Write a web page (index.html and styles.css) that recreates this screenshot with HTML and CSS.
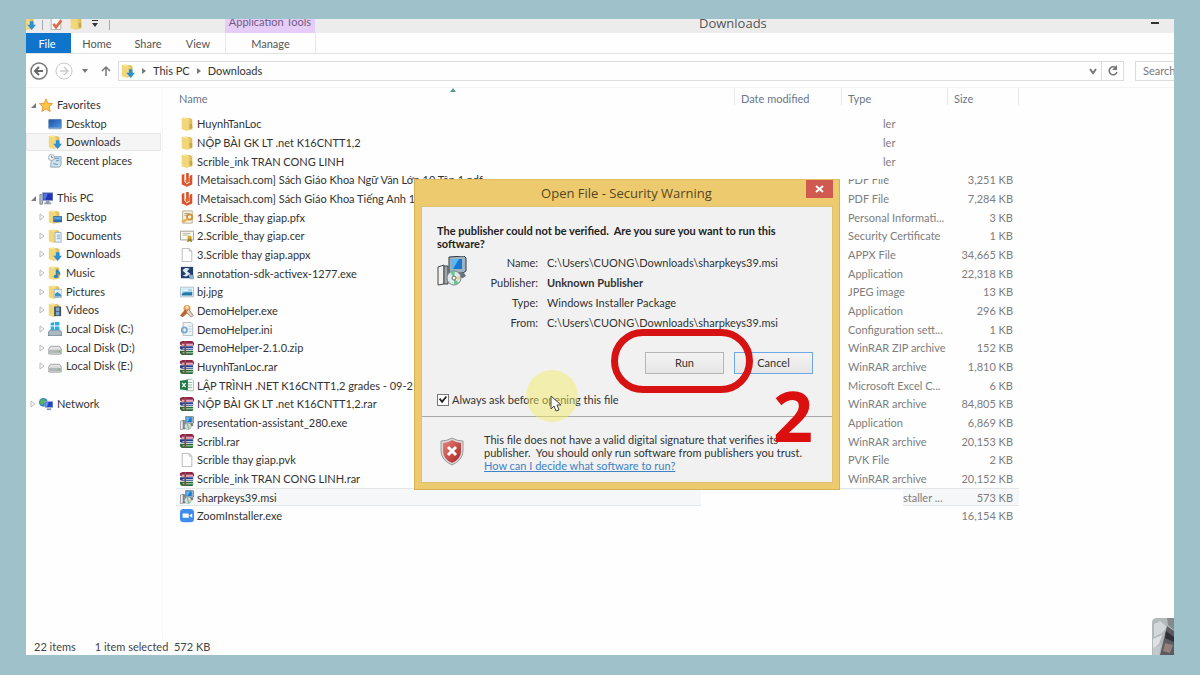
FILE: index.html
```html
<!DOCTYPE html>
<html lang="en">
<head>
<meta charset="utf-8">
<title>Downloads</title>
<link rel="stylesheet" href="styles.css">
</head>
<body>
<svg class="sprite" aria-hidden="true">
  <defs>
    <linearGradient id="gold" x1="0" x2="1"><stop offset="0" stop-color="#f7e394"/><stop offset="1" stop-color="#d9b548"/></linearGradient>
    <linearGradient id="screen" x1="0" y1="0" x2="1" y2="1"><stop offset="0" stop-color="#1d4fa8"/><stop offset="1" stop-color="#4a9be8"/></linearGradient>
    <linearGradient id="red" x1="0" y1="0" x2="1" y2="1"><stop offset="0" stop-color="#e8837c"/><stop offset="1" stop-color="#a8221f"/></linearGradient>
  </defs>
  <symbol id="folder" viewBox="0 0 16 16"><path d="M2 1l6-1v15l-6-1z" fill="#f8e9a6"/><path d="M7 1h5l2 2v11l-7 2z" fill="url(#gold)"/><path d="M2 1l6 2v13l-6-2z" fill="#f1d67a"/><path d="M11 8h3v5h-3z" fill="#c9a545"/></symbol>
  <symbol id="downloads" viewBox="0 0 16 16"><use href="#folder" x="-1"/><path d="M9 6h4v4h3l-5 6-5-6h3z" fill="#2b8fd4"/></symbol>
  <symbol id="desktop-folder" viewBox="0 0 16 16"><use href="#folder" x="-1"/><path d="M6 7h10v7H6z" fill="#2f6aa8"/><path d="M7 8h8v3H7z" fill="#5aa0d8"/></symbol>
  <symbol id="documents" viewBox="0 0 16 16"><use href="#folder" x="-1"/><path d="M8 4h7v11H8z" fill="#eef5fb" stroke="#8fb2cc"/><path d="M10 7h4M10 9h4M10 11h4" stroke="#7ba7cb"/></symbol>
  <symbol id="music" viewBox="0 0 16 16"><use href="#folder" x="-1"/><path d="M10 4c1 3 4 3 3 6M10 4v8" fill="none" stroke="#2583bd" stroke-width="2"/><ellipse cx="9" cy="12" rx="2.500" ry="2" fill="#2583bd"/></symbol>
  <symbol id="pictures" viewBox="0 0 16 16"><use href="#folder" x="-1"/><path d="M7 5h9v9H7z" fill="#e8f3fa" stroke="#8eb0c6"/><path d="M8 10l3-2 4 3v2H8z" fill="#3e91bd"/></symbol>
  <symbol id="videos" viewBox="0 0 16 16"><use href="#folder" x="-1"/><path d="M7 4h8v11H7z" fill="#44525f"/><path d="M9 5h4v4H9zM9 10h4v4H9z" fill="#78a9cc"/></symbol>
  <symbol id="star" viewBox="0 0 16 16"><path d="M8 1l2 5 5.500.500-4 3.500 1.300 5.500L8 12.500 3.200 15.500l1.300-5.500-4-3.500L6 6z" fill="#fdc544" stroke="#e98f2e"/></symbol>
  <symbol id="desktop" viewBox="0 0 16 16"><path d="M1 3h14v10H1z" fill="url(#screen)" stroke="#4a6f9e"/><path d="M1 12h14v2H1z" fill="#8ba5c4"/></symbol>
  <symbol id="recent" viewBox="0 0 16 16"><path d="M4 3h11v9l-2 3H3z" fill="#cfe0ec" stroke="#8ca6b8"/><circle cx="4" cy="4" r="3.500" fill="#eef1f3" stroke="#9aa5ad"/><path d="M4 2v2h2M8 5h5M9 8l4-1M6 11l5 1" fill="none" stroke="#4f8fba"/></symbol>
  <symbol id="pc" viewBox="0 0 16 16"><path d="M1 4h3v11H1z" fill="#b6bcc4" stroke="#7c838c"/><path d="M4 2h12v9H4z" fill="#2038b8" stroke="#9aa6c4"/><path d="M5 3h5l-3 7H5z" fill="#5478e0"/><path d="M8 11h4v2h2v2H6v-2h2z" fill="#8f9bab"/></symbol>
  <symbol id="disk" viewBox="0 0 16 16"><path d="M3 6h10l3 4v3q0 2-2 2H2q-2 0-2-2v-3z" fill="#e2e2e2" stroke="#9b9b9b"/><path d="M1 10h14v4H1z" fill="#b4b7b9"/><path d="M12 11h2v2h-2z" fill="#4fd04a"/></symbol>
  <symbol id="windisk" viewBox="0 0 16 16"><path d="M3 9h10l3 3v4H0v-4z" fill="#a9b9c2" stroke="#64747e"/><path d="M3 1l4-1v4H3zM8 0h5v4H8zM3 5h4v4H3zM8 5h5v4H8z" fill="#28aee4"/></symbol>
  <symbol id="network" viewBox="0 0 16 16"><circle cx="5" cy="6" r="5" fill="#2d86c7"/><path d="M2 3l4-1 1 3-3 4-3-2z" fill="#58b858"/><path d="M7 5h9v7H7z" fill="#2445c0" stroke="#aab5cf"/><path d="M8 6h3l-2 5H8z" fill="#6d96ec"/><path d="M9 13h5v2H9z" fill="#8995a8"/></symbol>
  <symbol id="pdf" viewBox="0 0 16 16"><path d="M2 2l3-1v9l2 2v3l-5-2zM7 0h3v9H7zM11 3l3-1v11l-7 3v-3l4-2z" fill="#d9532c"/><path d="M6 8l5-2v4l-4 2z" fill="#e06a40"/></symbol>
  <symbol id="pfx" viewBox="0 0 16 16"><path d="M3 1h11v14H3z" fill="#f6f1e0" stroke="#b3a88a"/><path d="M5 4h6M5 6h5" stroke="#9a9a8c"/><circle cx="11" cy="8" r="3" fill="none" stroke="#d58f2c" stroke-width="2"/><path d="M9 9l-7 3v2h3l5-3" fill="#e8b04c"/></symbol>
  <symbol id="cer" viewBox="0 0 16 16"><path d="M.500 2.500h15v10H.500z" fill="#fbfaf0" stroke="#98958a"/><path d="M3 5h9M3 7h7" stroke="#b0ada0"/><circle cx="11" cy="10" r="2.500" fill="#d9a92f"/><path d="M9 11l-1 4 3-1 3 1-1-4z" fill="#a5831f"/></symbol>
  <symbol id="file" viewBox="0 0 16 16"><path d="M2.500.500h8l3 3v12h-11z" fill="#fdfdfd" stroke="#b5b5b5"/><path d="M10.500.500v3h3" fill="none" stroke="#b5b5b5"/></symbol>
  <symbol id="sdk" viewBox="0 0 16 16"><path d="M1 1h14v13H1z" fill="#20406f"/><path d="M3 5c2-3 5-3 8-2L8 6l4 3-5 3-4-1 4-2z" fill="#dfe9f3"/><path d="M10 9l6 2v4h-5z" fill="#8ab1c9"/></symbol>
  <symbol id="jpg" viewBox="0 0 16 16"><path d="M.500 2.500h15v11H.500z" fill="#fff" stroke="#a8b4bc"/><path d="M2 4h12v8H2z" fill="#a8d8f2"/><path d="M2 10c4-3 7-1 12-2v4H2z" fill="#2678a8"/><path d="M3 5h6v2H3z" fill="#e8f6fc"/></symbol>
  <symbol id="helper" viewBox="0 0 16 16"><circle cx="8" cy="5" r="4" fill="#e89b52"/><path d="M6 6l-6 7 3 2 6-5z" fill="#b8682f"/><path d="M10 6l5 7-2 2-6-6z" fill="#e0d3c8" stroke="#a57d60"/><circle cx="8" cy="4" r="2" fill="#fbd9a8"/></symbol>
  <symbol id="ini" viewBox="0 0 16 16"><path d="M3.500.500h9l2 2v13h-11z" fill="#eef3f7" stroke="#aab7c1"/><circle cx="5" cy="9" r="3" fill="none" stroke="#7da5c6" stroke-width="2"/><path d="M10 5h3M10 8h3M10 11h3" stroke="#b4c4d0"/></symbol>
  <symbol id="rar" viewBox="0 0 16 16"><path d="M0 1l3-1h11l2 2v3H2L0 4z" fill="#8e2546"/><path d="M2 3h13v2H2z" fill="#e7a2b8"/><path d="M0 6h15v4H2L0 9z" fill="#233f8e"/><path d="M3 8h13v1H3z" fill="#c9d6ef"/><path d="M0 11h15v4l-1 1H2l-2-2z" fill="#286b3a"/><path d="M3 13h13v1H3z" fill="#cfe8c8"/><path d="M5 0h2v16H5z" fill="#8a4a43"/></symbol>
  <symbol id="xls" viewBox="0 0 16 16"><path d="M7.500 1.500h6l2 2v11h-8z" fill="#fff" stroke="#9cb7a4"/><path d="M9 5h5M9 8h5M9 11h5" stroke="#70a983"/><path d="M0 3l9-1v12l-9-1z" fill="#1f7a46"/><path d="M2.500 5.500l4 5M6.500 5.500l-4 5" stroke="#fff" stroke-width="1.500"/></symbol>
  <symbol id="installer" viewBox="0 0 30 30"><path d="M12 1l15-1 2 2v13l-3 2H12z" fill="#9fb2c0" stroke="#2f3a44"/><path d="M14 3h11v10H14z" fill="#1878d0"/><path d="M14 3h8l-6 10h-2z" fill="#5eb7f2"/><path d="M13 17h14l2 3-3 2H14z" fill="#69737c"/><path d="M1 11l6-2v19l-6 1z" fill="#f0f0f0" stroke="#464646"/><path d="M7 10h4v18H7z" fill="#9ea4a8" stroke="#464646"/><circle cx="17" cy="22" r="7" fill="#dfe9ec" stroke="#78858c"/><path d="M17 22l-4-6 5-1zM17 22l5 5-5 2z" fill="#6fc68d"/><path d="M17 22l6-2v4z" fill="#ecd67b"/><circle cx="17" cy="22" r="2" fill="#fff" stroke="#5e6d74"/></symbol>
  <symbol id="zoom" viewBox="0 0 16 16"><rect width="16" height="15" rx="4" fill="#3f8cf0"/><path d="M3 5h6q1 0 1 1v4H4q-1 0-1-1zM11 7l3-2v5l-3-2z" fill="#fff"/></symbol>
  <symbol id="open" viewBox="0 0 8 8"><path d="M7 2v5H2z" fill="#7b7b7b"/></symbol>
  <symbol id="closed" viewBox="0 0 8 8"><path d="M2 1l4 3-4 3z" fill="none" stroke="#bcbcbc"/></symbol>
</svg>

<div class="window">
  <header class="titlebar">
    <div class="quick">
      <svg class="ico"><use href="#downloads"/></svg><i></i>
      <svg class="ico" viewBox="0 0 16 16"><path d="M2.500.500h11v15h-11z" fill="#fff" stroke="#a9a9a9"/><path d="M5 9l3 4 6-8" fill="none" stroke="#db6b45" stroke-width="3"/></svg>
      <svg class="ico"><use href="#folder"/></svg>
      <svg class="drop" viewBox="0 0 8 8"><path d="M1 0h6v1H1zM1 3h6L4 7z" fill="#333"/></svg><i></i>
    </div>
    <div class="context">Application Tools</div>
    <h1>Downloads</h1>
    <button class="minimise" aria-label="Minimize"></button>
  </header>
  <nav class="tabs">
    <button class="tab file">File</button><button class="tab">Home</button><button class="tab">Share</button><button class="tab">View</button><button class="tab manage">Manage</button>
  </nav>
  <div class="location">
    <button aria-label="Back"><svg width="18" height="18" viewBox="0 0 18 18"><circle cx="9" cy="9" r="8" fill="none" stroke="#777" stroke-width="1.500"/><path d="M13 9H5M9 5L5 9l4 4" fill="none" stroke="#666" stroke-width="2"/></svg></button>
    <button aria-label="Forward"><svg width="18" height="18" viewBox="0 0 18 18"><circle cx="9" cy="9" r="8" fill="none" stroke="#ccc"/><path d="M5 9h8M9 5l4 4-4 4" fill="none" stroke="#ccc" stroke-width="1.500"/></svg></button>
    <button class="recent-btn" aria-label="Recent locations"><svg width="8" height="8"><path d="M1 2h6L4 6z" fill="#777"/></svg></button>
    <button class="up" aria-label="Up"><svg width="10" height="12" viewBox="0 0 10 12"><path d="M5 11V2M1 6l4-4 4 4" fill="none" stroke="#777" stroke-width="1.500"/></svg></button>
    <div class="address">
      <svg class="ico"><use href="#downloads"/></svg>
      <svg class="sep" viewBox="0 0 6 8"><path d="M1 1l4 3-4 3z" fill="#777"/></svg><span>This PC</span>
      <svg class="sep" viewBox="0 0 6 8"><path d="M1 1l4 3-4 3z" fill="#777"/></svg><span>Downloads</span>
      <button class="history" aria-label="Previous locations"><svg width="8" height="8"><path d="M1 2l3 4 3-4" fill="none" stroke="#777" stroke-width="2"/></svg></button>
      <button class="refresh" aria-label="Refresh"><svg width="12" height="12" viewBox="0 0 12 12"><path d="M9 3a4 4 0 1 0 1 4" fill="none" stroke="#777" stroke-width="1.500"/><path d="M10 0v5H5z" fill="#777"/></svg></button>
    </div>
    <input class="search" type="text" placeholder="Search" aria-label="Search">
  </div>

  <div class="body">
    <ul class="tree">
      <li class="root"><svg class="arrow"><use href="#open"/></svg><svg class="ico"><use href="#star"/></svg>Favorites</li>
      <li><svg class="ico"><use href="#desktop"/></svg>Desktop</li>
      <li class="current"><svg class="ico"><use href="#downloads"/></svg>Downloads</li>
      <li><svg class="ico"><use href="#recent"/></svg>Recent places</li>
      <li class="blank"></li>
      <li class="root"><svg class="arrow"><use href="#open"/></svg><svg class="ico"><use href="#pc"/></svg>This PC</li>
      <li><svg class="arrow"><use href="#closed"/></svg><svg class="ico"><use href="#desktop-folder"/></svg>Desktop</li>
      <li><svg class="arrow"><use href="#closed"/></svg><svg class="ico"><use href="#documents"/></svg>Documents</li>
      <li><svg class="arrow"><use href="#closed"/></svg><svg class="ico"><use href="#downloads"/></svg>Downloads</li>
      <li><svg class="arrow"><use href="#closed"/></svg><svg class="ico"><use href="#music"/></svg>Music</li>
      <li><svg class="arrow"><use href="#closed"/></svg><svg class="ico"><use href="#pictures"/></svg>Pictures</li>
      <li><svg class="arrow"><use href="#closed"/></svg><svg class="ico"><use href="#videos"/></svg>Videos</li>
      <li><svg class="arrow"><use href="#closed"/></svg><svg class="ico"><use href="#windisk"/></svg>Local Disk (C:)</li>
      <li><svg class="arrow"><use href="#closed"/></svg><svg class="ico"><use href="#disk"/></svg>Local Disk (D:)</li>
      <li><svg class="arrow"><use href="#closed"/></svg><svg class="ico"><use href="#disk"/></svg>Local Disk (E:)</li>
      <li class="blank"></li>
      <li class="root"><svg class="arrow"><use href="#closed"/></svg><svg class="ico"><use href="#network"/></svg>Network</li>
    </ul>

    <main class="files">
      <table>
        <colgroup><col><col class="c-date"><col class="c-type"><col class="c-size"></colgroup>
        <thead><tr><th><span>Name</span><svg class="sort" viewBox="0 0 6 4"><path d="M0 4l3-4 3 4z" fill="#5b9a94"/></svg></th><th><span>Date modified</span></th><th><span>Type</span></th><th><span>Size</span></th></tr></thead>
        <tbody>
          <tr><td><svg class="ico"><use href="#folder"/></svg>HuynhTanLoc</td><td></td><td class="tail">ler</td><td></td></tr>
          <tr><td><svg class="ico"><use href="#folder"/></svg>NỘP BÀI GK LT .net K16CNTT1,2</td><td></td><td class="tail">ler</td><td></td></tr>
          <tr><td><svg class="ico"><use href="#folder"/></svg>Scrible_ink TRAN CONG LINH</td><td></td><td class="tail">ler</td><td></td></tr>
          <tr><td><svg class="ico"><use href="#pdf"/></svg>[Metaisach.com] Sách Giáo Khoa Ngữ Văn Lớp 10 Tập 1.pdf</td><td></td><td>PDF File</td><td>3,251 KB</td></tr>
          <tr><td><svg class="ico"><use href="#pdf"/></svg>[Metaisach.com] Sách Giáo Khoa Tiếng Anh 10</td><td></td><td>PDF File</td><td>7,284 KB</td></tr>
          <tr><td><svg class="ico"><use href="#pfx"/></svg>1.Scrible_thay giap.pfx</td><td></td><td>Personal Informati...</td><td>3 KB</td></tr>
          <tr><td><svg class="ico"><use href="#cer"/></svg>2.Scrible_thay giap.cer</td><td></td><td>Security Certificate</td><td>1 KB</td></tr>
          <tr><td><svg class="ico"><use href="#file"/></svg>3.Scrible thay giap.appx</td><td></td><td>APPX File</td><td>34,665 KB</td></tr>
          <tr><td><svg class="ico"><use href="#sdk"/></svg>annotation-sdk-activex-1277.exe</td><td></td><td>Application</td><td>22,318 KB</td></tr>
          <tr><td><svg class="ico"><use href="#jpg"/></svg>bj.jpg</td><td></td><td>JPEG image</td><td>13 KB</td></tr>
          <tr><td><svg class="ico"><use href="#helper"/></svg>DemoHelper.exe</td><td></td><td>Application</td><td>296 KB</td></tr>
          <tr><td><svg class="ico"><use href="#ini"/></svg>DemoHelper.ini</td><td></td><td>Configuration sett...</td><td>1 KB</td></tr>
          <tr><td><svg class="ico"><use href="#rar"/></svg>DemoHelper-2.1.0.zip</td><td></td><td>WinRAR ZIP archive</td><td>152 KB</td></tr>
          <tr><td><svg class="ico"><use href="#rar"/></svg>HuynhTanLoc.rar</td><td></td><td>WinRAR archive</td><td>1,810 KB</td></tr>
          <tr><td><svg class="ico"><use href="#xls"/></svg>LẬP TRÌNH .NET K16CNTT1,2 grades - 09-21-20</td><td></td><td>Microsoft Excel C...</td><td>6 KB</td></tr>
          <tr><td><svg class="ico"><use href="#rar"/></svg>NỘP BÀI GK LT .net K16CNTT1,2.rar</td><td></td><td>WinRAR archive</td><td>84,805 KB</td></tr>
          <tr><td><svg class="ico"><use href="#installer"/></svg>presentation-assistant_280.exe</td><td></td><td>Application</td><td>6,869 KB</td></tr>
          <tr><td><svg class="ico"><use href="#rar"/></svg>Scribl.rar</td><td></td><td>WinRAR archive</td><td>20,153 KB</td></tr>
          <tr><td><svg class="ico"><use href="#file"/></svg>Scrible thay giap.pvk</td><td></td><td>PVK File</td><td>2 KB</td></tr>
          <tr><td><svg class="ico"><use href="#rar"/></svg>Scrible_ink TRAN CONG LINH.rar</td><td></td><td>WinRAR archive</td><td>20,152 KB</td></tr>
          <tr class="selected"><td><svg class="ico"><use href="#installer"/></svg>sharpkeys39.msi</td><td></td><td class="tail wide">staller ...</td><td>573 KB</td></tr>
          <tr><td><svg class="ico"><use href="#zoom"/></svg>ZoomInstaller.exe</td><td></td><td></td><td>16,154 KB</td></tr>
        </tbody>
      </table>
    </main>
  </div>

  <footer class="status"><span>22 items</span><span>1 item selected&nbsp; 572 KB</span></footer>

  <div class="patch upper"></div>
  <div class="patch lower"></div>
  <svg class="corner" viewBox="0 0 22 37" aria-hidden="true"><path d="M0 5q0-5 5-5h17v37H0z" fill="#b3b9bb"/><path d="M2 6l6-3 7 6-5 6-8 4z" fill="#d3d8da"/><path d="M1 21l9-4-3 9-6 5z" fill="#dde1e2"/><path d="M1 30l8-3-2 10H1z" fill="#c3c8ca"/><path d="M15 8l7 5v24H8z" fill="#5b5b60"/><path d="M14 13l8 6v5l-9-4z" fill="#303137"/><path d="M13 25l8 2-3 8-7-2z" fill="#957e7f"/><path d="M15 0h7v12l-6-5z" fill="#858b8d"/></svg>

  <section class="dialog" role="dialog" aria-labelledby="dlg-title">
    <div class="dlg-bar"><h2 id="dlg-title">Open File - Security Warning</h2><button class="close" aria-label="Close"><svg width="9" height="8" viewBox="0 0 9 8"><path d="M1 1l7 6M8 1L1 7" stroke="#fff" stroke-width="2"/></svg></button></div>
    <div class="dlg-body">
      <div class="dlg-top">
        <p class="ask">The publisher could not be verified.&nbsp; Are you sure you want to run this software?</p>
        <div class="info">
          <svg class="big"><use href="#installer"/></svg>
          <dl>
            <dt>Name:</dt><dd>C:\Users\CUONG\Downloads\sharpkeys39.msi</dd>
            <dt>Publisher:</dt><dd><b>Unknown Publisher</b></dd>
            <dt>Type:</dt><dd>Windows Installer Package</dd>
            <dt>From:</dt><dd>C:\Users\CUONG\Downloads\sharpkeys39.msi</dd>
          </dl>
        </div>
        <div class="actions"><button>Run</button><button class="default">Cancel</button></div>
        <label class="always"><input type="checkbox" checked><span>Always ask before opening this file</span></label>
      </div>
      <div class="dlg-foot">
        <svg class="shield" viewBox="0 0 24 29"><path d="M12 1q5 3 11 3v10q0 9-11 14Q1 23 1 14V4q6 0 11-3z" fill="#d9d9d9" stroke="#9b9b9b"/><path d="M12 3q5 3 9 3v8q0 8-9 12-9-4-9-12V6q5 0 9-3z" fill="url(#red)"/><path d="M8 10l8 8M16 10l-8 8" stroke="#fff" stroke-width="3"/></svg>
        <p>This file does not have a valid digital signature that verifies its<br>publisher.&nbsp; You should only run software from publishers you trust.<br><a href="#help">How can I decide what software to run?</a></p>
      </div>
    </div>
  </section>

  <div class="glow"></div>
  <svg class="cursor" viewBox="0 0 12 18"><path d="M1 1v13l3-3 2 5 3-1-2-5h4z" fill="#fff" stroke="#444"/></svg>
  <div class="ring"></div>
  <div class="step">2</div>
</div>
</body>
</html>
```
FILE: styles.css
```css
* { box-sizing: border-box; }
body {
  margin: 0;
  min-height: 100vh;
  padding: 19px 26px 20px;
  display: flex;
  background: #9fc1c9;
  font: 11px/18px Lato, "Noto Sans", sans-serif;
  color: #333;
}
button, input { font: inherit; color: inherit; }
button { border: 0; padding: 0; background: none; }
svg { display: block; flex: none; }
.sprite { position: absolute; width: 0; height: 0; }
.ico { width: 14px; height: 14px; }

.window {
  position: relative;
  flex: 1;
  min-width: 0;
  display: flex;
  flex-direction: column;
  overflow: hidden;
  background: #fefefe;
}

.titlebar {
  display: flex;
  height: 14px;
  overflow: hidden;
  background: #ececec;
}
.quick {
  width: 199px;
  display: flex;
  gap: 6px;
  align-items: flex-end;
  height: 11px;
  padding-right: 118px;
}
.quick .ico:first-child { margin-left: -4px; }
.quick i { flex: none; width: 1px; height: 10px; background: #aaa; }
.drop { width: 8px; height: 8px; margin: 0 4px 2px 2px; }
.context {
  width: 90px;
  text-align: center;
  line-height: 5px;
  white-space: nowrap;
  background: #e6cdf7;
  color: #705b82;
}
.titlebar h1 {
  flex: 1;
  margin: 0;
  padding-left: 384px;
  font: 400 13px/8px "Open Sans", sans-serif;
  color: #555;
}
.minimise { width: 8px; height: 2px; margin: 3px 15px 0 0; background: #333; }

.tabs {
  display: flex;
  height: 21px;
  border-bottom: 1px solid #e2e2e2;
  color: #555;
}
.tab { width: 50px; line-height: 22px; }
.tab.file { width: 45px; height: 20px; padding-right: 3px; margin-right: 1px; background: #0f75cc; color: #fff; }
.tab.manage { width: 91px; margin-left: 2px; border: solid #e8e8e8; border-width: 0 1px; }
.tab:nth-child(3) { margin-left: 1px; }

.location {
  display: flex;
  align-items: center;
  height: 33px;
  padding-left: 4px;
}
.location > button { width: 18px; margin-right: 7px; }
.location > .recent-btn { width: 8px; margin: 0 12px 0 1px; }
.location > .up { width: 10px; }
.address {
  flex: 1;
  display: flex;
  align-items: center;
  height: 20px;
  padding-left: 2px;
  border: 1px solid #dcdcdc;
}
.sep { width: 6px; height: 8px; margin: 0 6px; }
.history { margin-left: auto; width: 18px; padding-left: 6px; }
.refresh { width: 22px; height: 18px; border-left: 1px solid #dcdcdc; padding-left: 5px; }
.search {
  width: 39px;
  height: 20px;
  margin-left: 11px;
  padding: 0 0 0 7px;
  border: 1px solid #dcdcdc;
  border-right: 0;
  border-radius: 0;
  background: #fff;
}
.search::placeholder { color: #777; }

.body { flex: 1; display: flex; border-top: 1px solid #f4f4f4; }
.tree {
  width: 137px;
  margin: 0;
  padding: 7px 1px 0 0;
  list-style: none;
  display: grid;
  grid-auto-rows: 19px 19px 18px;
  align-content: start;
  border-right: 1px solid #f6f6f6;
}
.tree li {
  display: flex;
  align-items: center;
  gap: 4px;
  padding-left: 22px;
  white-space: nowrap;
}
.tree li.root { padding-left: 13px; }
.tree li.current { background: #f5f5f5; outline: 1px solid #e8e8e8; outline-offset: -1px; }
.arrow { width: 8px; height: 8px; margin: 0 -2px 0 -10px; }

.files { flex: 1; padding: 0 155px 0 13px; }
table { width: 100%; table-layout: fixed; border-collapse: separate; border-spacing: 0; }
.c-date { width: 107px; }
.c-type { width: 106px; }
.c-size { width: 71px; }
th { height: 26px; padding: 0; position: relative; text-align: left; vertical-align: top; font-weight: 400; color: #68768a; }
th span { display: block; height: 17px; line-height: 22px; padding-left: 6px; border-right: 1px solid #e8e8e8; }
th:first-child span { padding-left: 3px; }
.sort { position: absolute; top: 0; left: 49%; width: 6px; height: 4px; }
td { height: 19px; padding: 0 0 0 6px; line-height: 17px; white-space: nowrap; color: #7d7d7d; }
tr:nth-child(3n) td { height: 18px; }
td:first-child { display: flex; align-items: center; gap: 3px; padding-left: 4px; color: #333; }
td:last-child { text-align: right; padding: 0 6px 0 0; }
td.tail { padding-left: 41px; }
td.tail.wide { padding-left: 61px; }
.selected td { background: #f6f7f8; box-shadow: inset 0 1px #e3e7e9, inset 0 -1px #e3e7e9; }

.status { display: flex; gap: 19px; padding: 0 8px; line-height: 16px; color: #444; }

.patch { position: absolute; background: #fefefe; }
.patch.upper { left: 814px; top: 146px; width: 44px; height: 14px; }
.patch.lower { left: 675px; top: 471px; width: 202px; height: 40px; }
.corner { position: absolute; right: 0; bottom: 0; width: 22px; height: 37px; }

.dialog {
  position: absolute;
  left: 388px;
  top: 160px;
  width: 426px;
  padding: 0 6px 6px;
  background: #eeca6f;
  border: 1px solid #d8b054;
  border-top-color: #e3bd62;
  color: #333;
}
.dlg-bar { display: flex; height: 26px; }
.dlg-bar h2 { flex: 1; margin: 0; padding-left: 26px; text-align: center; font: 400 13px/26px "Open Sans", sans-serif; color: #54471f; }
.close { width: 27px; height: 18px; display: grid; place-items: center; background: #d05a50; }
.dlg-body { background: #f1f1f1; border: 1px solid #e0c275; }
.dlg-top { padding: 17px 0 10px 15px; border-bottom: 1px solid #a9a9a9; }
.ask { margin: 0 48px 0 0; font-weight: 700; line-height: 13px; color: #222; }
.info { display: flex; padding-top: 3px; }
.big { width: 30px; height: 30px; margin-top: 3px; }
dl { margin: 0; display: grid; grid-template-columns: 71px 1fr; column-gap: 9px; line-height: 20px; }
dt { text-align: right; }
dd { margin: 0; white-space: nowrap; }
.actions { display: flex; justify-content: flex-end; gap: 10px; padding: 19px 19px 19px 0; }
.actions button { width: 79px; height: 22px; border: 1px solid #b5b5b5; background: linear-gradient(#f3f3f3, #e6e6e6); }
.actions .default { border-color: #6ea8e4; }
.always { display: flex; align-items: center; gap: 3px; line-height: 13px; }
.always input {
  appearance: none;
  width: 12px;
  height: 12px;
  margin: 0;
  border: 1px solid #777;
  background: #fff;
  display: grid;
  place-items: center;
}
.always input::before { content: ""; width: 8px; height: 7px; background: #222; clip-path: polygon(0 45%, 15% 30%, 38% 60%, 85% 0, 100% 15%, 42% 100%, 35% 100%); }
.dlg-foot { display: flex; align-items: flex-start; gap: 20px; padding: 16px 0 10px 18px; }
.dlg-foot p { margin: 0; line-height: 13px; white-space: nowrap; }
.dlg-foot a { color: #3c82c6; }
.shield { width: 24px; height: 29px; margin-top: 4px; }

.glow { position: absolute; left: 500px; top: 351px; width: 52px; height: 52px; border-radius: 50%; background: #f5ec5e; opacity: .45; }
.cursor { position: absolute; left: 524px; top: 376px; width: 12px; height: 18px; }
.ring { position: absolute; left: 585px; top: 310px; width: 142px; height: 64px; border: 7px solid #d61212; border-radius: 32px; }
.step { position: absolute; left: 747px; top: 361px; font: 700 70px/70px "Open Sans", sans-serif; color: #dc0f0f; }
```
